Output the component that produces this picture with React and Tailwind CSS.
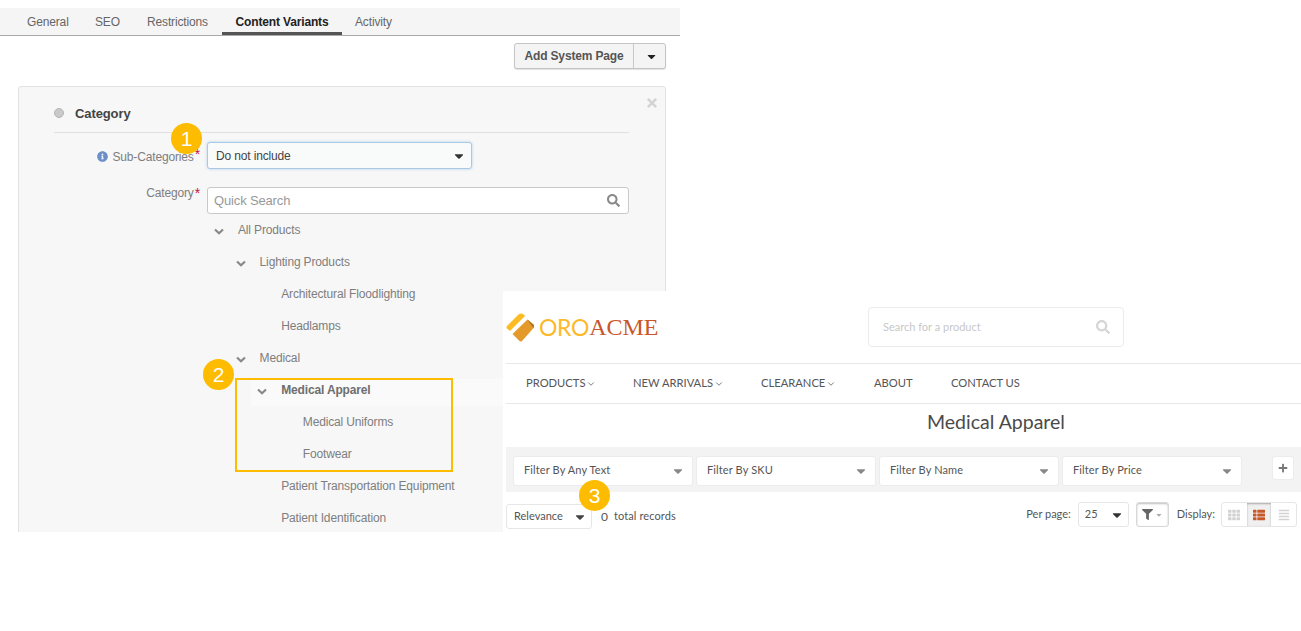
import React from "react";
import {
  FaCaretDown, FaFilter, FaInfoCircle, FaPlus, FaSearch, FaTimes, FaTh, FaThList, FaAlignJustify,
} from "react-icons/fa";
import { LuChevronDown } from "react-icons/lu";

const Badge = ({ n, className }) => (
  <div className={`absolute w-[31px] h-[31px] rounded-full bg-[#fdbc00] text-white text-[21px] leading-[31px] text-center font-['Liberation_Sans',sans-serif] ${className}`}>{n}</div>
);

const tabs = [
  ["General", "w-[95px] pl-[27px]"],
  ["SEO", "w-[52px]"],
  ["Restrictions", "w-[75px]"],
];

const TreeChevron = () => (
  <svg width="10" height="7" viewBox="0 0 10 7" className="mt-[2px]">
    <path d="M1 1.5 L5 5.2 L9 1.5" fill="none" stroke="#888" strokeWidth="2.2" />
  </svg>
);

const Tree = ({ items }) => (
  <div className="flex flex-col">
    {items.map(([label, depth, open, bold]) => (
      <div
        key={label}
        className={`flex items-center text-[12px] text-[#7e7e7e] ${bold ? "mt-[5px] h-[27px] pb-[5px] ml-[44px] bg-[#fafafa]" : "h-8"}`}
        style={{ paddingLeft: bold ? 6.2 : 7 + depth * 21.6 }}
      >
        <span className="w-[24px] shrink-0 flex items-center">
          {open && <TreeChevron />}
        </span>
        <span className={bold ? "font-bold text-[#6e6e6e]" : ""}>{label}</span>
      </div>
    ))}
  </div>
);

const treeItems = [
  ["All Products", 0, true],
  ["Lighting Products", 1, true],
  ["Architectural Floodlighting", 2, false],
  ["Headlamps", 2, false],
  ["Medical", 1, true],
  ["Medical Apparel", 2, true, true],
  ["Medical Uniforms", 3, false],
  ["Footwear", 3, false],
  ["Patient Transportation Equipment", 2, false],
  ["Patient Identification", 2, false],
];

const Admin = () => (
  <div className="w-[680px] h-[532px] pt-2 overflow-hidden font-['Liberation_Sans',sans-serif] text-[12px] tracking-[-0.15px]">
    <div className="h-[28px] bg-[#f5f5f5] border-b border-[#aaaaaa] flex items-stretch text-[#666]">
      {tabs.map(([t, c]) => (
        <div key={t} className={`${c} flex items-center h-[27px]`}>{t}</div>
      ))}
      <div className="w-[120px] h-[27px] border-b-[3px] border-[#555] flex items-center justify-center font-bold text-[#222] pt-[3px]">Content Variants</div>
      <div className="pl-[13px] h-[27px] flex items-center">Activity</div>
    </div>
    <div className="h-[50px] pt-[7px] pr-[14px] flex justify-end items-start">
      <div className="flex h-[26px] rounded-[3px] border border-[#c4c4c4] bg-[#f4f4f4] shadow-[0_1px_1px_rgba(0,0,0,0.12)] text-[#555] font-bold">
        <div className="w-[119px] flex items-center justify-center border-r border-[#c9c9c9]">Add System Page</div>
        <div className="w-[31px] flex items-center justify-center text-[#222] pl-[4px]"><FaCaretDown className="text-[13px]" /></div>
      </div>
    </div>
    <div className="relative ml-[18px] w-[648px] h-[460px] bg-[#f7f7f7] border border-[#e2e2e2] rounded-t-[3px] pl-[35px] pr-[36px] pt-[14px]">
      <FaTimes className="absolute right-[6px] top-[9px] text-[14px] text-[#d4d4d4]" />
      <div className="h-[32px] border-b border-[#e0e0e0] flex items-start">
        <span className="w-[10px] h-[10px] mt-[7px] rounded-full bg-[#c9c9c9] border border-[#b5b5b5]" />
        <span className="ml-[11px] text-[13px] leading-[26px] font-bold text-[#444] tracking-[-0.1px]">Category</span>
      </div>
      <div className="mt-[9px] flex">
        <div className="w-[153px] h-[27px] flex items-center justify-end pr-[7px] text-[#7e7e7e] pt-[2px]">
          <FaInfoCircle className="text-[11px] text-[#6d8fc9] mr-[4px]" />
          <span>Sub-Categories</span>
          <span className="text-[#c9113c] text-[14px] self-start mt-[3px] ml-[1px] leading-[14px]">*</span>
        </div>
        <div className="w-[265px] h-[27px] rounded-[3px] border border-[#a9c9e6] bg-[#f9fafa] shadow-[0_0_3px_rgba(100,160,220,0.45)] flex items-center justify-between pl-[8px] pr-[5px] text-[#444]">
          <span>Do not include</span>
          <FaCaretDown className="text-[14px] text-[#333]" />
        </div>
      </div>
      <div className="mt-[18px] flex">
        <div className="w-[153px] h-[27px] flex items-start justify-end pr-[7px] text-[#7e7e7e]">
          <span className="leading-[12px]">Category</span>
          <span className="text-[#c9113c] text-[14px] ml-[1px] leading-[12px]">*</span>
        </div>
        <div className="w-[422px] h-[27px] rounded-[3px] border border-[#c9c9c9] bg-white flex items-center justify-between pl-[6px] pr-[8px] text-[13px] text-[#999]">
          <span>Quick Search</span>
          <FaSearch className="text-[13px] text-[#8a8a8a]" />
        </div>
      </div>
      <div className="ml-[153px]"><Tree items={treeItems} /></div>
    </div>
  </div>
);

const NavItem = ({ label, w, chevron }) => (
  <div className={`${w} flex items-center`}>
    <span>{label}</span>
    {chevron && <LuChevronDown className="text-[10px] ml-[1px] text-[#666]" />}
  </div>
);

const FilterBox = ({ label }) => (
  <div className="w-[180px] h-[30px] bg-white rounded-[3px] border border-[#ececec] flex items-center justify-between pl-[10px] pr-[7px] text-[11px] tracking-[0.12px] text-[#555]">
    <span className="pb-[2px]">{label}</span>
    <FaCaretDown className="text-[14px] text-[#888]" />
  </div>
);

const Logo = () => (
  <div className="w-[362px] flex items-center">
    <svg width="29" height="29" viewBox="0 0 29 29" className="shrink-0">
      <path d="M1 13 L13 1 Q15 0 17 1 L19 3 L4 18 L1 15.5 Q0 14 1 13 Z" fill="#fdbb24" />
      <path d="M6.5 21 L21.5 6.5 L28 12 L28 14.5 L16 28 Q15 29 13.5 28 Z" fill="#e39a2a" />
      <path d="M21.5 6.5 L28 12 L27.5 15 L24 10.5 Z" fill="#a8752a" />
    </svg>
    <span className="ml-[4px] font-['Lato',sans-serif] font-normal text-[23px] leading-[28px] text-[#fdb92c] tracking-[-0.3px]">ORO</span>
    <span className="font-['Liberation_Serif',serif] text-[24px] leading-[28px] text-[#c8572a]">ACME</span>
  </div>
);

const Storefront = () => (
  <div className="absolute left-[503px] top-[291px] w-[798px] h-[241px] bg-white pl-[3px] font-['Lato',sans-serif] text-[#555]">
    <div className="h-[73px] flex items-center border-b border-[#e8e8e8]">
      <Logo />
      <div className="w-[256px] h-[40px] rounded-[4px] border border-[#ececec] flex items-center justify-between pl-[14px] pr-[13px] text-[11px] text-[#c8c8c8]">
        <span>Search for a product</span>
        <FaSearch className="text-[14px] text-[#d6d6d6]" />
      </div>
    </div>
    <div className="h-[40px] border-b border-[#e8e8e8] flex items-stretch pl-[20px] text-[11.2px] text-[#555]">
      <NavItem label="PRODUCTS" w="w-[107px]" chevron />
      <NavItem label="NEW ARRIVALS" w="w-[128px]" chevron />
      <NavItem label="CLEARANCE" w="w-[113px]" chevron />
      <NavItem label="ABOUT" w="w-[77px]" />
      <NavItem label="CONTACT US" w="w-[80px]" />
    </div>
    <div className="h-[43px] flex items-center pl-[421px] text-[19.5px] text-[#4a4a4a] pb-[7px]">Medical Apparel</div>
    <div className="h-[45px] bg-[#f3f3f3] flex items-start pl-[7px] pt-[9px]">
      <div className="flex gap-[3px]">
        <FilterBox label="Filter By Any Text" />
        <FilterBox label="Filter By SKU" />
        <FilterBox label="Filter By Name" />
        <FilterBox label="Filter By Price" />
      </div>
      <div className="ml-[30px] w-[22px] h-[24px] bg-white rounded-[3px] border border-[#ececec] flex items-center justify-center">
        <FaPlus className="text-[10px] text-[#777]" />
      </div>
    </div>
    <div className="h-[40px] flex items-start pt-[12px] text-[11px]">
      <div className="w-[86px] h-[25px] rounded-[3px] border border-[#e6e6e6] flex items-center justify-between pl-[7px] pr-[4px] text-[#555]">
        <span>Relevance</span>
        <FaCaretDown className="text-[14px] text-[#444]" />
      </div>
      <div className="ml-[9px] h-[25px] flex items-center text-[#555]">
        <span className="mr-[6px] text-[12px]">0</span>
        <span className="tracking-[0.1px]">total records</span>
      </div>
      <div className="ml-auto mr-[4px] -mt-[2px] flex items-center h-[25px]">
        <span className="text-[#555]">Per page:</span>
        <div className="ml-[7px] w-[51px] h-[25px] rounded-[3px] border border-[#e6e6e6] flex items-center justify-between pl-[6px] pr-[4px] text-[#555]">
          <span>25</span>
          <FaCaretDown className="text-[14px] text-[#333]" />
        </div>
        <div className="ml-[7px] w-[33px] h-[25px] rounded-[3px] border border-[#d8d8d8] shadow-[inset_0_1px_2px_rgba(0,0,0,0.25)] flex items-center justify-center gap-[2px]">
          <FaFilter className="text-[11px] text-[#666]" />
          <FaCaretDown className="text-[8px] text-[#aaa]" />
        </div>
        <span className="ml-[8px]">Display:</span>
        <div className="ml-[6px] w-[76px] h-[25px] rounded-[3px] border border-[#e6e6e6] flex items-stretch overflow-hidden">
          <div className="flex-1 flex items-center justify-center"><FaTh className="text-[12px] text-[#d2d2d2]" /></div>
          <div className="flex-1 flex items-center justify-center bg-[#f0f0f0] shadow-[inset_0_1px_2px_rgba(0,0,0,0.3)]"><FaThList className="text-[12px] text-[#c8572a]" /></div>
          <div className="flex-1 flex items-center justify-center"><FaAlignJustify className="text-[12px] text-[#d2d2d2]" /></div>
        </div>
      </div>
    </div>
  </div>
);

export default function App() {
  return (
    <div className="relative w-[1301px] h-[631px] bg-white overflow-hidden">
      <Admin />
      <div className="absolute left-[235px] top-[378px] w-[218px] h-[94px] border-2 border-[#fdbc00]" />
      <Storefront />
      <Badge n="1" className="left-[171px] top-[123px]" />
      <Badge n="2" className="left-[203px] top-[359px]" />
      <Badge n="3" className="left-[579px] top-[480px]" />
    </div>
  );
}
